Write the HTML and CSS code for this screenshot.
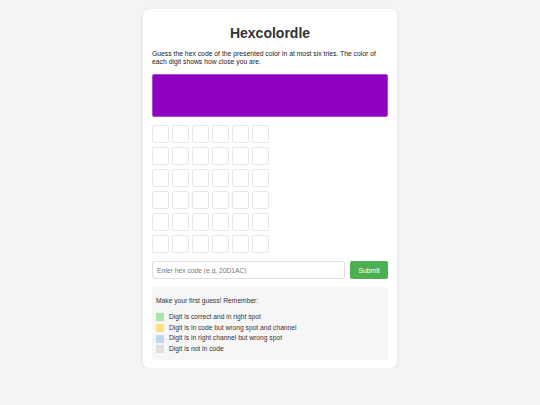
FILE: index.html
```html
<!DOCTYPE html>
<html lang="en">
<head>
    <meta charset="UTF-8">
    <meta name="viewport" content="width=device-width, initial-scale=1.0">
    <title>Hexcolordle</title>
    <link rel="stylesheet" href="styles.css">
</head>
<body>
    <div class="card">
        <h1 class="title">Hexcolordle</h1>
        <p class="intro">Guess the hex code of the presented color in at most six tries. The color of each digit shows how close you are.</p>
        <div class="target"></div>
        <div class="board">
            <div class="cell"></div><div class="cell"></div><div class="cell"></div><div class="cell"></div><div class="cell"></div><div class="cell"></div>
            <div class="cell"></div><div class="cell"></div><div class="cell"></div><div class="cell"></div><div class="cell"></div><div class="cell"></div>
            <div class="cell"></div><div class="cell"></div><div class="cell"></div><div class="cell"></div><div class="cell"></div><div class="cell"></div>
            <div class="cell"></div><div class="cell"></div><div class="cell"></div><div class="cell"></div><div class="cell"></div><div class="cell"></div>
            <div class="cell"></div><div class="cell"></div><div class="cell"></div><div class="cell"></div><div class="cell"></div><div class="cell"></div>
            <div class="cell"></div><div class="cell"></div><div class="cell"></div><div class="cell"></div><div class="cell"></div><div class="cell"></div>
        </div>
        <div class="guess-row">
            <input class="guess-input" type="text" placeholder="Enter hex code (e.g. 20D1AC)">
            <button class="btn-submit">Submit</button>
        </div>
        <div class="info">
            <p class="info-msg">Make your first guess! Remember:</p>
            <div class="legend"><span class="swatch correct"></span>Digit is correct and in right spot</div>
            <div class="legend"><span class="swatch present"></span>Digit is in code but wrong spot and channel</div>
            <div class="legend"><span class="swatch channel"></span>Digit is in right channel but wrong spot</div>
            <div class="legend"><span class="swatch absent"></span>Digit is not in code</div>
        </div>
    </div>
</body>
</html>
```

FILE: styles.css
```css
* {
    padding: 0;
    margin: 0;
    box-sizing: border-box;
    font-family: "Liberation Sans", Arial, sans-serif;
}

body {
    background-color: #f4f4f4;
    color: #333;
}

.card {
    width: 254px;
    margin: 9px auto 0;
    padding: 13px 9px 8px;
    background-color: #fff;
    border-radius: 6px;
    box-shadow: 0 1px 4px rgba(0, 0, 0, .1);
}

.title {
    text-align: center;
    font-size: 14px;
    font-weight: bold;
    line-height: 22px;
    color: #333;
}

.intro {
    margin-top: 6px;
    font-size: 6.8px;
    line-height: 8px;
    color: #222;
}

.target {
    height: 43px;
    margin-top: 8px;
    background-color: #9000c0;
    border: 1px solid #a84fd0;
    border-radius: 2px;
}

.board {
    display: grid;
    grid-template-columns: repeat(6, 17px);
    grid-auto-rows: 18px;
    column-gap: 3px;
    row-gap: 4px;
    margin-top: 8px;
}

.cell {
    border: 1px solid #e8e8e8;
    border-radius: 2px;
}

.guess-row {
    display: flex;
    gap: 5px;
    margin-top: 8px;
}

.guess-input {
    flex: 1;
    height: 18px;
    padding: 0 4px;
    border: 1px solid #e0e0e0;
    border-radius: 2px;
    font-size: 6.7px;
    outline: none;
}

.guess-input::placeholder {
    color: #777;
}

.btn-submit {
    width: 38px;
    height: 18px;
    border: none;
    border-radius: 2px;
    background-color: #4caf50;
    color: #fff;
    font-size: 6.8px;
}

.info {
    margin-top: 8px;
    padding: 9px 4px 5px;
    background-color: #f6f6f6;
    border-radius: 2px;
}

.info-msg {
    font-size: 6.7px;
    line-height: 10px;
    margin-bottom: 6px;
}

.legend {
    display: flex;
    align-items: center;
    font-size: 6.7px;
    line-height: 10.7px;
}

.swatch {
    display: inline-block;
    width: 8px;
    height: 8px;
    margin-right: 5px;
}

.correct { background-color: #a5e6a5; }
.present { background-color: #f9e27c; }
.channel { background-color: #bcd9f0; }
.absent { background-color: #dedede; }
```
